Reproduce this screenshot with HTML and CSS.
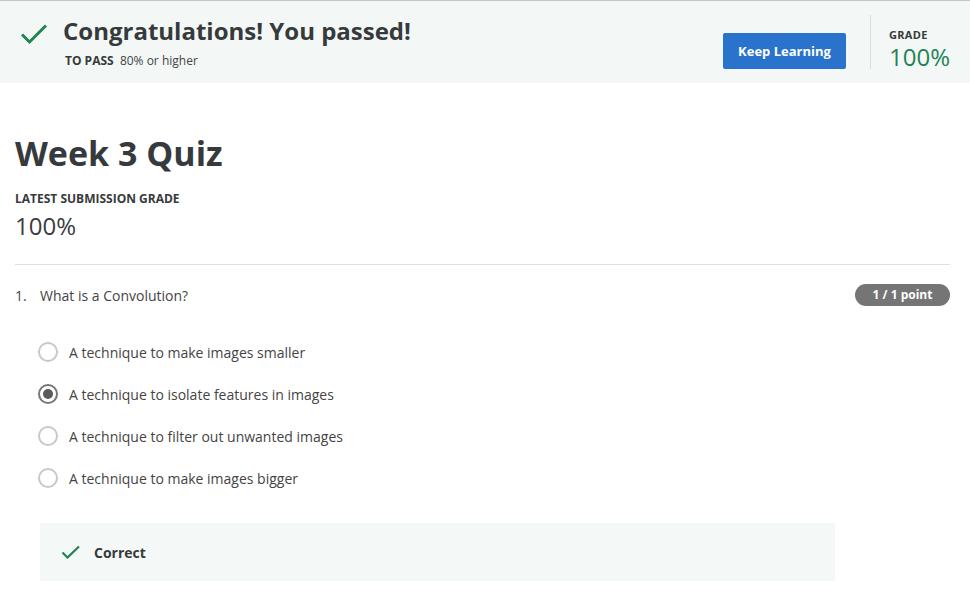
FILE: index.html
```html
<!DOCTYPE html>
<html>
<head>
<meta charset="utf-8">
<link rel="stylesheet" href="styles.css">
</head>
<body>
<div class="banner">
  <div class="banner-main">
    <svg class="check" width="28" height="22" viewBox="0 0 28 22"><path d="M2 11.5 L9.5 19 L26 2.5" fill="none" stroke="#1f8354" stroke-width="3"/></svg>
    <div class="banner-text">
      <div class="congrats">Congratulations! You passed!</div>
      <div class="topass"><b>TO PASS</b>&nbsp; 80% or higher</div>
    </div>
  </div>
  <button class="keep">Keep Learning</button>
  <div class="sep"></div>
  <div class="grade">
    <div class="grade-label">GRADE</div>
    <div class="grade-val">100%</div>
  </div>
</div>
<div class="content">
  <h1 class="title">Week 3 Quiz</h1>
  <div class="latest-label">LATEST SUBMISSION GRADE</div>
  <div class="latest-val">100%</div>
  <div class="divider"></div>
  <div class="question">
    <div class="q-head">
      <span class="q-num">1.</span>
      <span class="q-text">What is a Convolution?</span>
      <span class="badge">1 / 1 point</span>
    </div>
    <div class="options">
      <div class="option"><span class="radio"></span><span>A technique to make images smaller</span></div>
      <div class="option"><span class="radio checked"></span><span>A technique to isolate features in images</span></div>
      <div class="option"><span class="radio"></span><span>A technique to filter out unwanted images</span></div>
      <div class="option"><span class="radio"></span><span>A technique to make images bigger</span></div>
    </div>
    <div class="feedback">
      <svg width="20" height="15" viewBox="0 0 20 15"><path d="M1.5 7.5 L6.5 12.5 L18 1.5" fill="none" stroke="#1f8354" stroke-width="2.2"/></svg>
      <span>Correct</span>
    </div>
  </div>
</div>
</body>
</html>
```
FILE: styles.css
```css
* { box-sizing: border-box; }
body {
  margin: 0;
  font-family: "Open Sans", "Noto Sans", sans-serif;
  color: #373a3c;
  background: #fff;
}
.banner {
  border-top: 1px solid #c8c8c8;
  background: #f3f8f6;
  height: 83px;
  display: flex;
  align-items: flex-start;
  padding: 0 20px 0 20px;
}
.banner-main {
  display: flex;
  align-items: flex-start;
  flex: 1;
  padding-top: 15px;
}
.check { margin-top: 7px; margin-right: 15px; }
.congrats {
  font-size: 24px;
  font-weight: 700;
  line-height: 30px;
  color: #373a3c;
}
.topass {
  font-size: 12px;
  color: #444;
  margin-top: 7px;
  margin-left: 2px;
  line-height: 16px;
}
.topass b { font-weight: 700; color: #373a3c; }
.keep {
  margin-top: 32px;
  width: 123px;
  height: 36px;
  background: #2a73cc;
  color: #fff;
  border: none;
  border-radius: 2px;
  font-family: "Open Sans", sans-serif;
  font-size: 13px;
  font-weight: 700;
  padding: 0;
}
.sep {
  width: 1px;
  height: 54px;
  background: #dcdcdc;
  margin: 14px 18px 0 24px;
}
.grade { padding-top: 27px; }
.grade-label {
  font-size: 11px;
  font-weight: 700;
  letter-spacing: 0.3px;
  line-height: 13px;
  color: #373a3c;
}
.grade-val {
  font-size: 24px;
  line-height: 26px;
  margin-top: 3px;
  color: #1f8354;
  font-weight: 400;
}
.content { padding: 0 20px 0 15px; }
.title {
  margin: 48px 0 0 0;
  font-size: 34px;
  font-weight: 700;
  line-height: 44px;
  color: #373a3c;
}
.latest-label {
  margin-top: 16px;
  font-size: 12px;
  font-weight: 700;
  line-height: 16px;
}
.latest-val {
  font-size: 24px;
  line-height: 32px;
  margin-top: 3px;
  color: #3c3c3c;
}
.divider {
  height: 1px;
  background: #e0e0e0;
  margin-top: 22px;
}
.q-head {
  display: flex;
  align-items: center;
  margin-top: 19px;
  font-size: 14px;
  height: 22px;
}
.q-num { width: 25px; color: #444; }
.q-text { flex: 1; color: #444; }
.badge {
  background: #757575;
  color: #fff;
  font-size: 12px;
  font-weight: 700;
  border-radius: 11px;
  height: 22px;
  line-height: 22px;
  width: 95px;
  text-align: center;
}
.options {
  margin-top: 35px;
  padding-left: 23px;
  display: flex;
  flex-direction: column;
  gap: 20px;
}
.option {
  display: flex;
  align-items: center;
  height: 22px;
  font-size: 14px;
  color: #444;
}
.radio {
  width: 20px;
  height: 20px;
  border: 2px solid #c8c8c8;
  border-radius: 50%;
  margin-right: 11px;
  display: flex;
  align-items: center;
  justify-content: center;
}
.radio.checked { border-color: #777; }
.radio.checked::after {
  content: "";
  width: 10px;
  height: 10px;
  border-radius: 50%;
  background: #5a5a5a;
}
.feedback {
  margin: 34px 0 0 25px;
  width: 795px;
  height: 58px;
  background: #f4f8f6;
  display: flex;
  align-items: center;
  padding-left: 21px;
  font-size: 14px;
  font-weight: 700;
}
.feedback svg { margin-right: 13px; }
```
